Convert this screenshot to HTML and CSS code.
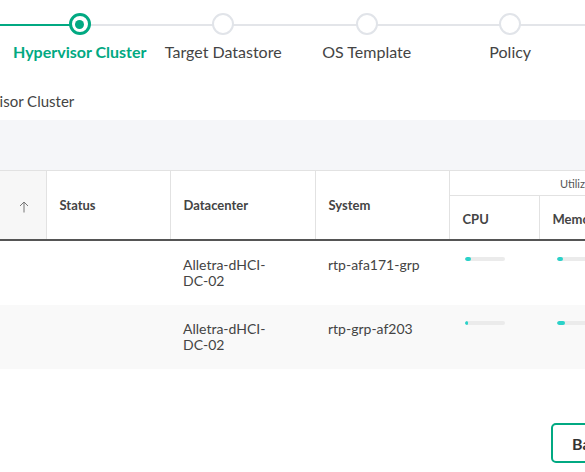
FILE: index.html
```html
<!DOCTYPE html>
<html>
<head>
<meta charset="utf-8">
<link rel="stylesheet" href="styles.css">
</head>
<body>
<div class="page">
  <ol class="stepper">
    <li class="step done"><span class="dot"></span><span class="label">Source</span></li>
    <li class="step active"><span class="dot"></span><span class="label">Hypervisor Cluster</span></li>
    <li class="step"><span class="dot"></span><span class="label">Target Datastore</span></li>
    <li class="step"><span class="dot"></span><span class="label">OS Template</span></li>
    <li class="step"><span class="dot"></span><span class="label">Policy</span></li>
    <li class="step"><span class="dot"></span><span class="label">Review</span></li>
  </ol>

  <h2 class="title">Hypervisor Cluster</h2>

  <div class="toolbar"></div>

  <table class="grid">
    <colgroup>
      <col class="c-sort"><col class="c-status"><col class="c-dc"><col class="c-sys"><col class="c-cpu"><col class="c-mem"><col class="c-sto">
    </colgroup>
    <thead>
      <tr>
        <th rowspan="2" class="sort"><svg class="arrow" width="10" height="12" viewBox="0 0 10 12"><path d="M5 11.5V1M1 5l4-4 4 4" fill="none" stroke="#777" stroke-width="1"/></svg></th>
        <th rowspan="2">Status</th>
        <th rowspan="2">Datacenter</th>
        <th rowspan="2">System</th>
        <th colspan="3" class="group">Utilization</th>
      </tr>
      <tr>
        <th class="sub">CPU</th>
        <th class="sub">Memory</th>
        <th class="sub">Storage</th>
      </tr>
    </thead>
    <tbody>
      <tr>
        <td class="sortcell"></td>
        <td></td>
        <td>Alletra-dHCI-<br>DC-02</td>
        <td>rtp-afa171-grp</td>
        <td class="bar-cell"><div class="bar"><div class="fill" style="width:15%"></div></div></td>
        <td class="bar-cell mem"><div class="bar"><div class="fill" style="width:15%"></div></div></td>
        <td class="bar-cell"><div class="bar"><div class="fill" style="width:20%"></div></div></td>
      </tr>
      <tr class="alt">
        <td class="sortcell"></td>
        <td></td>
        <td>Alletra-dHCI-<br>DC-02</td>
        <td>rtp-grp-af203</td>
        <td class="bar-cell"><div class="bar"><div class="fill" style="width:8%"></div></div></td>
        <td class="bar-cell mem"><div class="bar"><div class="fill" style="width:20%"></div></div></td>
        <td class="bar-cell"><div class="bar"><div class="fill" style="width:20%"></div></div></td>
      </tr>
    </tbody>
  </table>

  <div class="footer">
    <button class="btn">Back</button>
  </div>
</div>
</body>
</html>
```

FILE: styles.css
```css
html, body {
  margin: 0;
  padding: 0;
  background: #ffffff;
  overflow: hidden;
}
body {
  width: 585px;
  height: 472px;
  font-family: Lato, "Liberation Sans", sans-serif;
  color: #444444;
}
.page {
  position: relative;
  width: 585px;
  height: 472px;
  overflow: hidden;
}

/* stepper */
.stepper {
  list-style: none;
  margin: 0 0 0 -135.5px;
  padding: 13px 0 0 0;
  display: flex;
  width: 1000px;
}
.step {
  position: relative;
  width: 143.5px;
  display: flex;
  flex-direction: column;
  align-items: center;
  flex: none;
}
.step::before,
.step::after {
  content: "";
  position: absolute;
  top: 11px;
  height: 2px;
  width: 50%;
  background: #e3e5e9;
}
.step::before { left: 0; }
.step::after { right: 0; }
.step.done::before,
.step.done::after,
.step.active::before { background: #01a982; }
.dot {
  position: relative;
  z-index: 1;
  width: 22px;
  height: 22px;
  box-sizing: border-box;
  border: 2.5px solid #e1e4e9;
  border-radius: 50%;
  background: #fff;
}
.step.active .dot,
.step.done .dot {
  border: 3px solid #01a982;
}
.step.active .dot::after {
  content: "";
  position: absolute;
  left: 50%;
  top: 50%;
  width: 9px;
  height: 9px;
  margin: -4.5px 0 0 -4.5px;
  border-radius: 50%;
  background: #01a982;
}
.label {
  margin-top: 6px;
  font-size: 16px;
  line-height: 22px;
  white-space: nowrap;
  color: #444;
}
.step.active .label {
  color: #01a982;
  font-weight: bold;
}

/* title */
.title {
  margin: 27px 0 0 -49px;
  font-size: 15px;
  font-weight: normal;
  line-height: 22px;
  color: #444;
}

.toolbar {
  margin-top: 8px;
  height: 50px;
  background: #f5f6f9;
}

/* table */
.grid {
  border-collapse: collapse;
  table-layout: fixed;
  width: 720px;
}
.c-sort { width: 46px; }
.c-status { width: 124px; }
.c-dc { width: 145px; }
.c-sys { width: 134px; }
.c-cpu { width: 90px; }
.c-mem { width: 90px; }
.c-sto { width: 91px; }

.grid thead th {
  font-size: 13px;
  font-weight: bold;
  color: #444;
  text-align: left;
  padding: 0 13px;
  border-left: 1px solid #e2e2e2;
  border-top: 1px solid #e2e2e2;
  background: #fff;
}
.grid thead tr:first-child th { height: 24px; }
.grid thead tr:last-child th {
  height: 40px;
  border-bottom: 2px solid #555555;
}
.grid thead th[rowspan] { border-bottom: 2px solid #555555; }
.grid thead th.sort {
  border-left: none;
  background: #f7f7f7;
  text-align: center;
  padding: 0 0 0 2px;
}
.arrow {
  display: inline-block;
  vertical-align: middle;
}
.grid thead th.group {
  font-size: 11px;
  font-weight: normal;
  text-align: center;
  color: #555;
}
.grid thead th.sub {
  padding-top: 3px;
}

.grid tbody td {
  height: 31px;
  padding: 16px 13px 16px 13px;
  vertical-align: top;
  font-size: 14px;
  line-height: 16px;
  color: #444;
}
.grid tbody tr.alt td { background: #f9f9f9; }
.grid tbody td.bar-cell { padding: 16px 16px 0 16px; }
.grid tbody td.bar-cell.mem { padding-left: 18px; }
.bar {
  width: 40px;
  height: 4px;
  border-radius: 2px;
  background: #ebebeb;
  overflow: hidden;
}
.fill {
  height: 100%;
  border-radius: 2px;
  background: #2ad2c9;
}

/* footer */
.footer {
  display: flex;
  padding: 54px 0 0 551px;
}
.btn {
  flex: none;
  height: 40px;
  padding: 0 18px 0 19px;
  border: 2px solid #01a982;
  border-radius: 5px;
  background: #fff;
  font-family: Lato, "Liberation Sans", sans-serif;
  font-size: 16px;
  font-weight: bold;
  color: #333;
}
```
